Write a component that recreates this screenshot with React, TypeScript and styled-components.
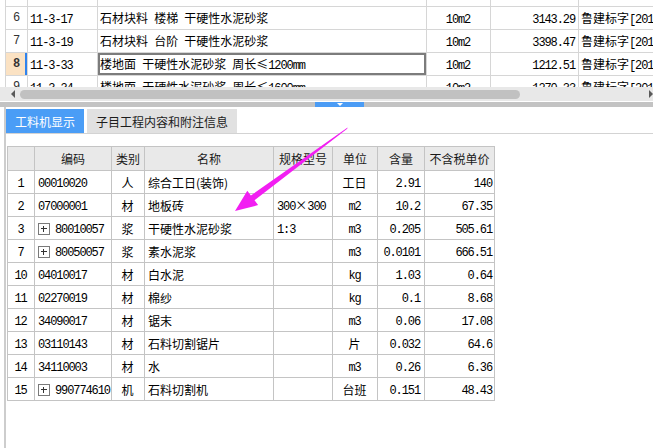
import React from 'react';
import styled, { createGlobalStyle } from 'styled-components';

const GlobalStyle = createGlobalStyle`
  html, body {
    margin: 0;
    padding: 0;
    background: #fff;
  }
  body {
    font-family: "Noto Sans CJK SC", "Liberation Sans", sans-serif;
    font-size: 12px;
    color: #000;
  }
  * {
    box-sizing: border-box;
  }
`;

type TopRow = {
  no: string;
  code: string;
  name: string;
  unit: string;
  price: string;
  src: string;
  selected?: boolean;
};

const topRows: TopRow[] = [
  { no: '6', code: '11-3-17', name: '石材块料 楼梯 干硬性水泥砂浆', unit: '10m2', price: '3143.29', src: '鲁建标字[201' },
  { no: '7', code: '11-3-19', name: '石材块料 台阶 干硬性水泥砂浆', unit: '10m2', price: '3398.47', src: '鲁建标字[201' },
  { no: '8', code: '11-3-33', name: '楼地面 干硬性水泥砂浆 周长≤1200mm', unit: '10m2', price: '1212.51', src: '鲁建标字[201', selected: true },
  { no: '9', code: '11-3-34', name: '楼地面 干硬性水泥砂浆 周长≤1600mm', unit: '10m2', price: '1270.33', src: '鲁建标字[201' },
];

type MatRow = {
  no: string;
  code: string;
  expand?: boolean;
  kind: string;
  name: string;
  spec: string;
  unit: string;
  qty: string;
  price: string;
};

const matRows: MatRow[] = [
  { no: '1', code: '00010020', kind: '人', name: '综合工日(装饰)', spec: '', unit: '工日', qty: '2.91', price: '140' },
  { no: '2', code: '07000001', kind: '材', name: '地板砖', spec: '300×300', unit: 'm2', qty: '10.2', price: '67.35' },
  { no: '3', code: '80010057', expand: true, kind: '浆', name: '干硬性水泥砂浆', spec: '1:3', unit: 'm3', qty: '0.205', price: '505.61' },
  { no: '7', code: '80050057', expand: true, kind: '浆', name: '素水泥浆', spec: '', unit: 'm3', qty: '0.0101', price: '666.51' },
  { no: '10', code: '04010017', kind: '材', name: '白水泥', spec: '', unit: 'kg', qty: '1.03', price: '0.64' },
  { no: '11', code: '02270019', kind: '材', name: '棉纱', spec: '', unit: 'kg', qty: '0.1', price: '8.68' },
  { no: '12', code: '34090017', kind: '材', name: '锯末', spec: '', unit: 'm3', qty: '0.06', price: '17.08' },
  { no: '13', code: '03110143', kind: '材', name: '石料切割锯片', spec: '', unit: '片', qty: '0.032', price: '64.6' },
  { no: '14', code: '34110003', kind: '材', name: '水', spec: '', unit: 'm3', qty: '0.26', price: '6.36' },
  { no: '15', code: '990774610', expand: true, kind: '机', name: '石料切割机', spec: '', unit: '台班', qty: '0.151', price: '48.43' },
];

const topCols = [22, 70, 329, 64, 88, 200];
const matCols = [27, 77, 33, 129, 59, 45, 47, 70];

// ascii parts in a narrow mono face, the rest in the CJK face
const Mixed = ({ text }: { text: string }) => (
  <>
    {text.split(/([\x20-\x7e]+)/).map((part, i) =>
      /^[\x20-\x7e]+$/.test(part) ? <Num key={i}>{part}</Num> : part
    )}
  </>
);

const App = () => {
  return (
    <>
      <GlobalStyle />
      <Page>
        {/* -------- 定额列表 -------- */}
        <TopWrap>
          <TopTable>
            <colgroup>
              {topCols.map((w, i) => (
                <col key={i} style={{ width: w }} />
              ))}
            </colgroup>
            <tbody>
              <SpacerRow>
                {topCols.map((_, i) => (
                  <td key={i} />
                ))}
              </SpacerRow>
              {topRows.map((r) => (
                <tr key={r.no}>
                  <TopNo $selected={r.selected}>{r.no}</TopNo>
                  <TopCell>
                    <Num>{r.code}</Num>
                  </TopCell>
                  <TopCell $focused={r.selected}>
                    <Mixed text={r.name} />
                  </TopCell>
                  <TopCell $align="center">
                    <Num>{r.unit}</Num>
                  </TopCell>
                  <TopCell $align="right">
                    <Num>{r.price}</Num>
                  </TopCell>
                  <TopCell>
                    <Mixed text={r.src} />
                  </TopCell>
                </tr>
              ))}
            </tbody>
          </TopTable>
        </TopWrap>

        <ScrollBar>
          <ScrollArrow $dir="left" />
          <Thumb />
          <ScrollFill />
          <ScrollArrow $dir="right" />
        </ScrollBar>

        <Splitter>
          <SplitHandle />
        </Splitter>

        {/* -------- 工料机 -------- */}
        <BottomPanel>
          <TabBar>
            <Tab $active>工料机显示</Tab>
            <Tab>子目工程内容和附注信息</Tab>
          </TabBar>
          <TableArea>
            <MatTable>
              <colgroup>
                {matCols.map((w, i) => (
                  <col key={i} style={{ width: w }} />
                ))}
              </colgroup>
              <thead>
                <tr>
                  <HeadCell />
                  <HeadCell>编码</HeadCell>
                  <HeadCell>类别</HeadCell>
                  <HeadCell>名称</HeadCell>
                  <HeadCell>规格型号</HeadCell>
                  <HeadCell>单位</HeadCell>
                  <HeadCell>含量</HeadCell>
                  <HeadCell>不含税单价</HeadCell>
                </tr>
              </thead>
              <tbody>
                {matRows.map((r) => (
                  <tr key={r.no}>
                    <MatCell $align="center">
                      <Num>{r.no}</Num>
                    </MatCell>
                    <MatCell>
                      {r.expand && <PlusBox />}
                      <Num>{r.code}</Num>
                    </MatCell>
                    <MatCell $align="center">{r.kind}</MatCell>
                    <MatCell>{r.name}</MatCell>
                    <MatCell>
                      <Mixed text={r.spec} />
                    </MatCell>
                    <MatCell $align="center">
                      <Mixed text={r.unit} />
                    </MatCell>
                    <MatCell $align="right">
                      <Num>{r.qty}</Num>
                    </MatCell>
                    <MatCell $align="right" $tight>
                      <Num>{r.price}</Num>
                    </MatCell>
                  </tr>
                ))}
              </tbody>
            </MatTable>
          </TableArea>
        </BottomPanel>

        <Arrow viewBox="0 0 653 448" width="653" height="448">
          <polygon
            points="235,211 247.3,190.7 250.9,195.5 347.6,127.4 347.2,128.8 254.5,200.3 258.1,205.1"
            fill="#f21ef2"
          />
        </Arrow>
      </Page>
    </>
  );
};

export default App;

const Page = styled.div`
  position: relative;
  width: 653px;
  height: 448px;
  overflow: hidden;
  background: #fff;
  display: flex;
  flex-direction: column;
`;

const Num = styled.span`
  font-family: "Liberation Mono", "DejaVu Sans Mono", monospace;
  font-size: 12px;
  letter-spacing: -1.1px;
  white-space: pre;
`;

const TopWrap = styled.div`
  flex: none;
  height: 87px;
  overflow: hidden;
  padding-left: 5px;
`;

const TopTable = styled.table`
  border-collapse: collapse;
  table-layout: fixed;
  width: 773px;
`;

const SpacerRow = styled.tr`
  height: 6px;
  td {
    padding: 0;
    border-left: 1px solid #d6d6d6;
    border-right: 1px solid #d6d6d6;
    border-bottom: 1px solid #d6d6d6;
  }
`;

const TopCell = styled.td<{ $align?: 'left' | 'center' | 'right'; $focused?: boolean }>`
  height: 23px;
  padding: 0 3px 0 2px;
  border: 1px solid #d6d6d6;
  text-align: ${(p) => p.$align || 'left'};
  white-space: nowrap;
  overflow: hidden;
  vertical-align: middle;
  font-size: 12px;
  box-shadow: ${(p) => (p.$focused ? 'inset 0 0 0 2px #7c7c7c' : 'none')};
`;

const TopNo = styled.td<{ $selected?: boolean }>`
  height: 23px;
  padding: 0;
  border: 1px solid #d6d6d6;
  text-align: center;
  vertical-align: middle;
  font-family: "Liberation Mono", monospace;
  font-size: 12px;
  color: #333;
  font-weight: ${(p) => (p.$selected ? 700 : 400)};
  background: ${(p) => (p.$selected ? '#fbe2c3' : '#fff')};
  box-shadow: ${(p) => (p.$selected ? 'inset -2px 0 0 #2f83ee' : 'none')};
`;

const ScrollBar = styled.div`
  flex: none;
  height: 14px;
  margin-bottom: 1px;
  background: #e8e8e8;
  display: flex;
  align-items: center;
`;

const ScrollArrow = styled.div<{ $dir: 'left' | 'right' }>`
  width: ${(p) => (p.$dir === 'left' ? '20px' : '6px')};
  height: 14px;
  display: flex;
  align-items: center;
  justify-content: flex-end;
  padding-right: ${(p) => (p.$dir === 'left' ? '5px' : '0')};
  &::before {
    content: '';
    border-top: 4px solid transparent;
    border-bottom: 4px solid transparent;
    ${(p) =>
      p.$dir === 'left' ? 'border-right: 4px solid #5a5a5a;' : 'border-left: 4px solid #5a5a5a;'}
  }
`;

const Thumb = styled.div`
  width: 500px;
  height: 9px;
  border-radius: 5px;
  background: #c1c1c1;
`;

const ScrollFill = styled.div`
  flex: 1;
`;

const Splitter = styled.div`
  flex: none;
  height: 5px;
  background: #c3c3c3;
  display: flex;
`;

const SplitHandle = styled.div`
  margin-left: 315px;
  width: 49px;
  background: #4b9cf5;
  display: flex;
  justify-content: center;
  &::after {
    content: '';
    margin-top: 1px;
    height: 0;
    border-left: 3px solid transparent;
    border-right: 3px solid transparent;
    border-top: 3px solid #fff;
  }
`;

const BottomPanel = styled.div`
  flex: 1;
  margin-left: 4px;
  border-left: 2px solid #cdcdcd;
  display: flex;
  flex-direction: column;
`;

const TabBar = styled.div`
  flex: none;
  height: 27px;
  padding-top: 2px;
  display: flex;
  gap: 3px;
  border-bottom: 1px solid #d3d3d3;
`;

const Tab = styled.div<{ $active?: boolean }>`
  padding: 0 9px;
  display: flex;
  align-items: center;
  justify-content: center;
  font-size: 12px;
  background: ${(p) => (p.$active ? '#4a9df6' : '#e1e1e1')};
  color: ${(p) => (p.$active ? '#fff' : '#1c1c1c')};
`;

const TableArea = styled.div`
  padding: 12px 0 0 1px;
`;

const MatTable = styled.table`
  border-collapse: collapse;
  table-layout: fixed;
  width: 487px;
`;

const HeadCell = styled.th`
  height: 24px;
  padding: 0;
  border: 1px solid #c4c4c4;
  background: #e9e9e9;
  font-weight: 400;
  font-size: 12px;
  color: #1a1a1a;
  text-align: center;
  vertical-align: middle;
  white-space: nowrap;
  overflow: hidden;
`;

const MatCell = styled.td<{ $align?: 'left' | 'center' | 'right'; $tight?: boolean }>`
  height: 23px;
  padding: ${(p) => (p.$tight ? '0 2px 0 3px' : '0 4px 0 3px')};
  border: 1px solid #c4c4c4;
  text-align: ${(p) => p.$align || 'left'};
  vertical-align: middle;
  white-space: nowrap;
  overflow: hidden;
  font-size: 12px;
`;

const PlusBox = styled.span`
  position: relative;
  display: inline-block;
  width: 12px;
  height: 12px;
  margin-right: 5px;
  vertical-align: -2px;
  border: 1px solid #7a7a7a;
  background: #fff;
  &::before,
  &::after {
    content: '';
    position: absolute;
    background: #333;
  }
  &::before {
    left: 2px;
    right: 2px;
    top: 4px;
    height: 1px;
  }
  &::after {
    top: 2px;
    bottom: 2px;
    left: 4px;
    width: 1px;
  }
`;

const Arrow = styled.svg`
  position: absolute;
  left: 0;
  top: 0;
  pointer-events: none;
`;
